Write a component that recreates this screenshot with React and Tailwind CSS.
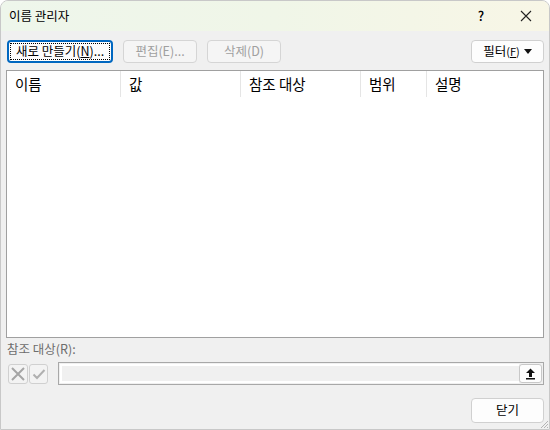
import React from "react";

const font = { fontFamily: '"Noto Sans CJK KR", "Noto Sans", sans-serif' };

function DialogButton({ children, disabled, focused, className = "" }) {
  if (focused) {
    return (
      <div className={`h-[23px] rounded-[4px] border-2 border-[#0067c0] bg-[#fdfdfd] p-[1px] ${className}`}>
        <div className="flex h-full items-center justify-center border border-dotted border-black text-[12.5px] text-black">
          {children}
        </div>
      </div>
    );
  }
  return (
    <div
      className={`flex h-[23px] items-center justify-center rounded-[4px] border text-[12.5px] ${
        disabled
          ? "border-[#d5d5d5] bg-[#f5f5f5] text-[#a0a0a0]"
          : "border-[#d0d0d0] bg-[#fdfdfd] text-black"
      } ${className}`}
    >
      {children}
    </div>
  );
}

const columns = [
  { label: "이름", w: "w-[114px]" },
  { label: "값", w: "w-[120px]" },
  { label: "참조 대상", w: "w-[120px]" },
  { label: "범위", w: "w-[66px]" },
  { label: "설명", w: "flex-1" },
];

export default function App() {
  return (
    <div
      style={font}
      className="relative flex h-[430px] w-[550px] flex-col overflow-hidden rounded-t-[8px] border border-[#c8c8c8] bg-[#f0f0f0]"
    >
      {/* Title bar */}
      <div className="flex h-[30px] shrink-0 items-center bg-gradient-to-r from-[#eef6eb] via-[#f0f6e8] to-[#f8f6e6]">
        <span className="pl-[8px] text-[12.5px] text-black">이름 관리자</span>
        <div className="ml-auto flex h-full items-center">
          <div className="flex h-full w-[44px] items-center justify-center text-[13px] font-medium text-black">?</div>
          <div className="flex h-full w-[46px] items-center justify-center">
            <svg width="12" height="12" viewBox="0 0 12 12">
              <path d="M1 1 L11 11 M11 1 L1 11" stroke="#222" strokeWidth="1.1" />
            </svg>
          </div>
        </div>
      </div>

      <div className="flex flex-1 flex-col px-[5px]">
        {/* Buttons */}
        <div className="mt-[9px] flex items-center pl-[1px]">
          <DialogButton focused className="w-[106px]">
            새로 만들기(<span className="underline">N</span>)...
          </DialogButton>
          <DialogButton disabled className="ml-[10px] w-[74px]">
            편집(E)...
          </DialogButton>
          <DialogButton disabled className="ml-[10px] w-[74px]">
            삭제(D)
          </DialogButton>
          <DialogButton className="ml-auto w-[73px] gap-[4px]">
            <span>
              필터<span className="text-[11px]">(</span>
              <span className="text-[11px] underline">F</span>
              <span className="text-[11px]">)</span>
            </span>
            <svg width="8" height="5" viewBox="0 0 8 5">
              <path d="M0 0 H8 L4 5 Z" fill="#111" />
            </svg>
          </DialogButton>
        </div>

        {/* Table */}
        <div className="mt-[7px] h-[268px] border border-[#a0a0a0] bg-white">
          <div className="flex h-[26px]">
            {columns.map((c, i) => (
              <div
                key={c.label}
                className={`${c.w} flex items-center pl-[8px] text-[14.5px] text-black ${
                  i < columns.length - 1 ? "border-r border-[#e5e5e5]" : ""
                }`}
              >
                {c.label}
              </div>
            ))}
          </div>
        </div>

        {/* Refers to */}
        <div className="mt-[3px] pl-[1px] text-[12.5px] leading-[16px] text-[#6d6d6d]">참조 대상(R):</div>
        <div className="mt-[5px] flex items-center">
          <div className="ml-[2px] flex h-[20px] w-[20px] items-center justify-center rounded-[3px] border border-[#d0d0d0] bg-[#f3f3f3]">
            <svg width="14" height="14" viewBox="0 0 14 14">
              <path d="M1 1 L13 13 M13 1 L1 13" stroke="#a5a5a5" strokeWidth="2" />
            </svg>
          </div>
          <div className="ml-[1px] flex h-[20px] w-[19px] items-center justify-center rounded-[3px] border border-[#d0d0d0] bg-[#f3f3f3]">
            <svg width="14" height="14" viewBox="0 0 14 14">
              <path d="M1.5 7.5 L5 11 L12.5 3" stroke="#b0b0b0" strokeWidth="2" fill="none" />
            </svg>
          </div>
          <div className="ml-[10px] flex h-[23px] flex-1 items-center border border-[#a8a8a8] bg-[#f0f0f0] p-[1px]">
            <div className="h-full flex-1 border-2 border-white border-r-0 bg-[#f0f0f0]" />
            <div className="flex h-[19px] w-[23px] items-center justify-center rounded-[3px] border border-[#c8c8c8] bg-[#fdfdfd]">
              <svg width="11" height="12" viewBox="0 0 11 12">
                <path d="M5.5 0.5 L10 5 H7 V9 H4 V5 H1 Z" fill="#111" />
                <rect x="1" y="10" width="9" height="1.5" fill="#111" />
              </svg>
            </div>
          </div>
        </div>

        {/* Close */}
        <div className="mt-[13px] flex justify-end">
          <DialogButton className="h-[25px] w-[73px]">닫기</DialogButton>
        </div>
      </div>

      {/* resize grip */}
      <svg className="absolute bottom-[1px] right-[1px]" width="8" height="8" viewBox="0 0 8 8">
        <path d="M8 1 L1 8 M8 4 L4 8 M8 7 L7 8" stroke="#b5b5b5" strokeWidth="1" />
      </svg>
    </div>
  );
}
